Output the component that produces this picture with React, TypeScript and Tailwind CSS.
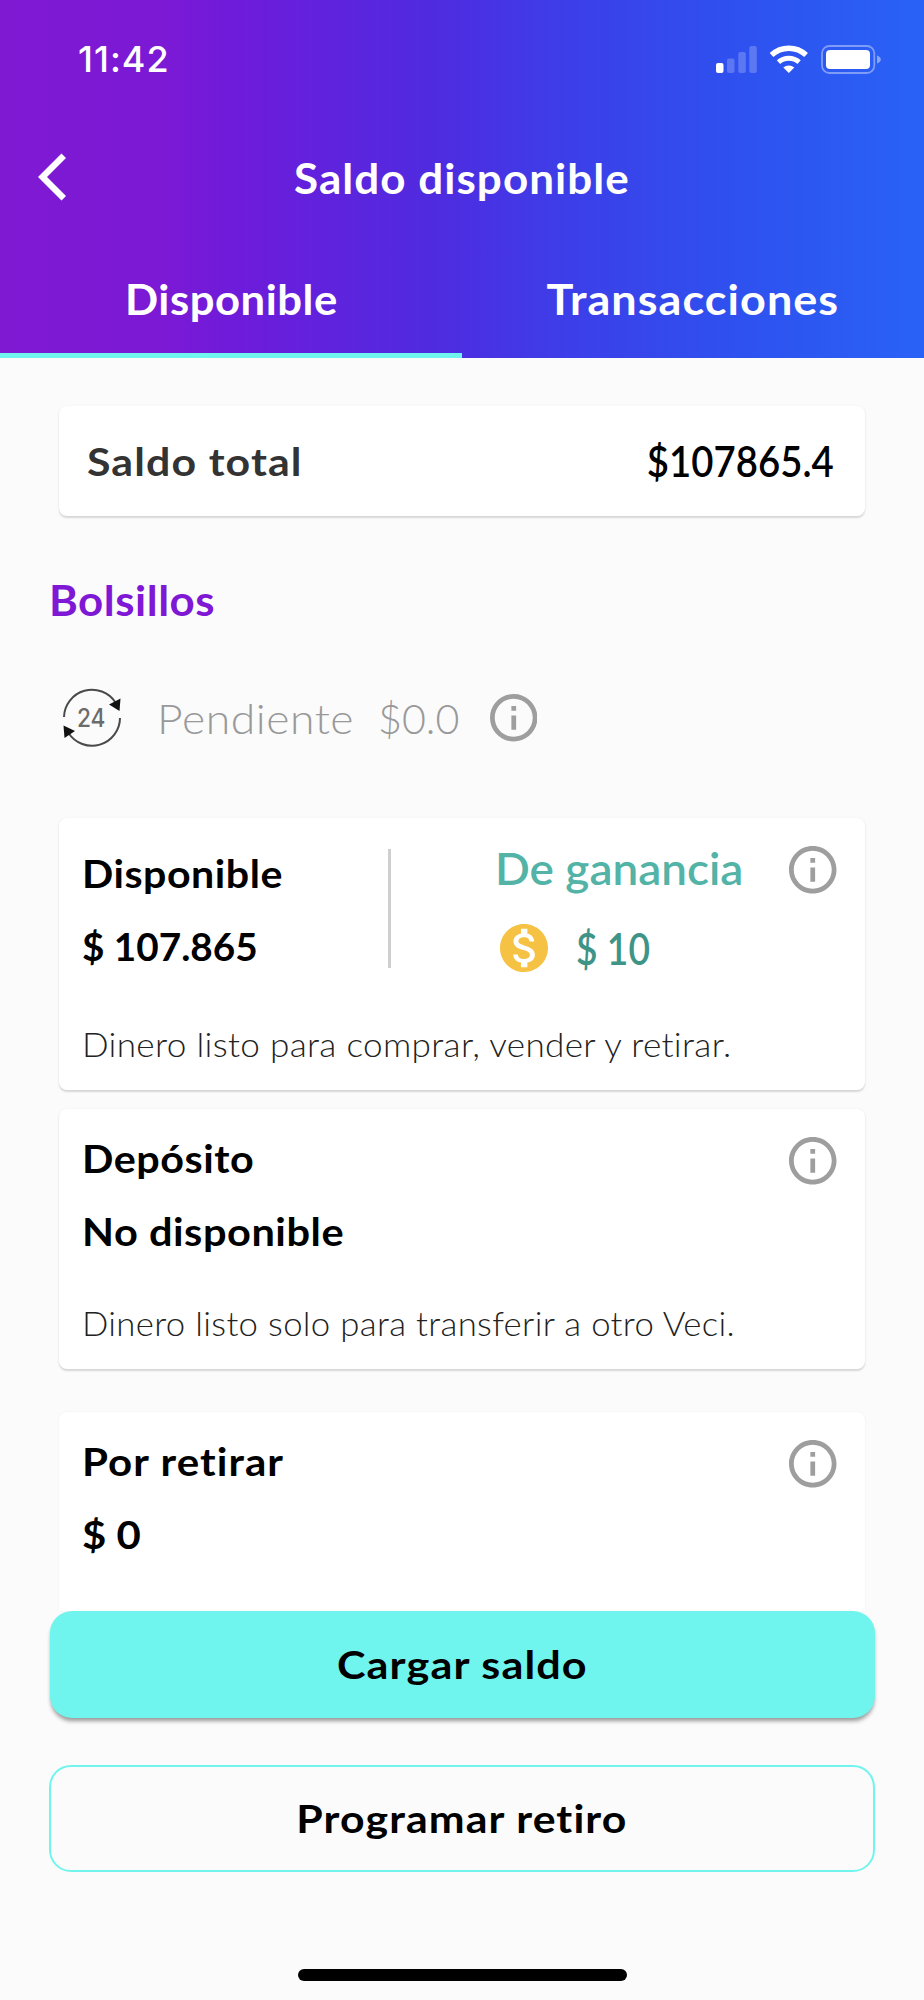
import type { ReactNode } from "react";

function InfoIcon() {
  return (
    <svg viewBox="2 2 20 20" className="size-[47.500px] shrink-0" fill="#9e9e9e">
      <path d="M11 7h2v2h-2zm0 4h2v6h-2zm1-9C6.48 2 2 6.48 2 12s4.48 10 10 10 10-4.48 10-10S17.52 2 12 2zm0 18c-4.41 0-8-3.59-8-8s3.59-8 8-8 8 3.59 8 8-3.59 8-8 8z" />
    </svg>
  );
}

function CoinIcon() {
  return (
    <svg viewBox="2 2 20 20" className="size-12 shrink-0" fill="#f5c244">
      <path d="M12 2C6.48 2 2 6.48 2 12s4.48 10 10 10 10-4.48 10-10S17.52 2 12 2zm1.41 16.09V20h-2.67v-1.93c-1.71-.36-3.16-1.46-3.27-3.4h1.96c.1 1.05.82 1.87 2.65 1.87 1.96 0 2.4-.98 2.4-1.59 0-.83-.44-1.61-2.67-2.14-2.48-.6-4.18-1.62-4.18-3.67 0-1.72 1.39-2.84 3.11-3.21V4h2.67v1.95c1.86.45 2.79 1.86 2.85 3.39H14.3c-.05-1.11-.64-1.87-2.22-1.87-1.5 0-2.4.68-2.4 1.64 0 .84.65 1.39 2.67 1.91s4.18 1.39 4.18 3.91c-.01 1.83-1.38 2.83-3.12 3.16z" />
    </svg>
  );
}

function Hours24Icon() {
  return (
    <svg viewBox="62 688 60 60" className="size-[60px] shrink-0">
      <g fill="none" stroke="#4a4a4a" strokeWidth="2">
        <path d="M64 717A28 28 0 0 1 115.500 702.500" />
        <path d="M120 718A28 28 0 0 1 68.500 733" />
      </g>
      <path d="M120.500 698.500L119.500 711L109 704.500Z" fill="#111" />
      <path d="M63.500 725.500L64.500 738L75 731Z" fill="#111" />
      <text x="77" y="727" fontSize="25" fontWeight="500" fill="#6b6b6b" textLength="28.500" lengthAdjust="spacingAndGlyphs" className="font-[Inter,sans-serif]">
        24
      </text>
    </svg>
  );
}

function StatusIcons() {
  return (
    <svg viewBox="715 42 168 32" className="h-8 w-[168px]" fill="white">
      <rect x="716" y="62" width="7.500" height="10" rx="2" />
      <g opacity="0.22">
        <rect x="727" y="57.500" width="7.500" height="14.500" rx="2" />
        <rect x="738.300" y="51" width="7.500" height="21" rx="2" />
        <rect x="749.300" y="45" width="7.500" height="27" rx="2" />
      </g>
      <g fill="none" stroke="white">
        <path d="M771.500 54a25.500 25.500 0 0 1 34.600 0" strokeWidth="5.400" />
        <path d="M778.500 61.200a15.500 15.500 0 0 1 20.600 0" strokeWidth="5" />
      </g>
      <path d="M783.300 66.500a8.200 8.200 0 0 1 11 0l-5.500 5.500z" />
      <rect x="822" y="45" width="52.300" height="27" rx="7.500" fill="none" stroke="white" strokeOpacity="0.4" strokeWidth="1.800" />
      <rect x="826" y="49" width="44" height="19" rx="4" />
      <path d="M877 54.500c2.500 1 3.800 2.300 3.800 4s-1.300 3-3.800 4z" opacity="0.45" />
    </svg>
  );
}

function Card({ className, children }: { className: string; children: ReactNode }) {
  return (
    <section className={`ml-[59px] w-[806px] shrink-0 bg-white ${className}`}>{children}</section>
  );
}

const shadow = "rounded-lg shadow-[0_1.5px_2px_rgba(0,0,0,0.14),0_0_3px_rgba(0,0,0,0.03)]";

export default function App() {
  return (
    <div className="flex h-[2000px] w-[924px] flex-col overflow-hidden bg-[#fbfbfb] font-[Lato,sans-serif] text-black [font-variant-ligatures:none]">
      <header className="h-[358px] shrink-0 bg-[linear-gradient(90deg,#8019d2_0%,#7b19d5_18%,#6f1bda_25%,#4f2be0_47%,#3c3fe9_62%,#2e51ef_80%,#2962f6_100%)] text-white">
        <div className="flex h-[118px] items-center justify-between pr-[41px] pl-[78px]">
          <span className="font-[Inter,sans-serif] text-[36px] font-[550] tracking-[1px]">11:42</span>
          <StatusIcons />
        </div>
        <div className="flex h-[118px] items-center pl-[38px]">
          <svg viewBox="0 0 28 48" className="h-12 w-7 shrink-0" fill="white">
            <path d="M23.500 0.500L0 24L23.500 47.500L28 43L9 24L28 5Z" />
          </svg>
          <h1 className="mt-[2px] ml-[228px] origin-left scale-x-[1.047] text-[42px] leading-[50px] font-bold tracking-[1px]">
            Saldo disponible
          </h1>
        </div>
        <nav className="grid grid-cols-2 text-[42px] font-bold">
          <div>
            <div className="flex h-[117px] items-center justify-center pt-[9px]">
              <span className="scale-x-[1.039] tracking-[0.5px]">Disponible</span>
            </div>
            <div className="h-[5px] bg-[#70f5ee]" />
          </div>
          <div className="flex h-[117px] items-center justify-center pt-[9px]">
            <span className="scale-x-[1.07] tracking-[1px]">Transacciones</span>
          </div>
        </nav>
      </header>

      <Card className={`mt-12 flex h-[110px] items-center justify-between pr-[31px] pl-7 ${shadow}`}>
        <span className="origin-left scale-x-[1.1] text-[39px] font-bold tracking-[1px] text-[#333]">Saldo total</span>
        <span className="origin-right scale-x-[0.891] text-[43px] font-semibold">$107865.4</span>
      </Card>

      <h2 className="mt-[59px] ml-[49px] shrink-0 origin-left scale-x-[1.045] self-start text-[42px] leading-[50px] font-bold tracking-[0.5px] text-[#7e18d4]">
        Bolsillos
      </h2>

      <div className="mt-[63px] ml-[62px] flex h-[60px] shrink-0 items-center text-[42px] leading-[58px] font-light text-[#999]">
        <Hours24Icon />
        <span className="ml-[35px] w-[221px] origin-left scale-x-[1.06] tracking-[0.5px]">Pendiente</span>
        <span className="w-[111.5px] origin-left scale-x-[0.981]">$0.0</span>
        <InfoIcon />
      </div>

      <Card className={`mt-[70px] h-[272px] pl-[23px] ${shadow}`}>
        <div className="flex h-[164px]">
          <div className="w-[306px] pt-[18.5px] text-[39px] leading-[73px] font-bold">
            <div className="origin-left scale-x-[1.055] tracking-[0.5px]">Disponible</div>
            <div className="origin-left scale-x-[0.992]">$ 107.865</div>
          </div>
          <div className="mt-[31px] h-[119px] w-[2.500px] bg-[#cfcfcf]" />
          <div className="ml-[104.5px] w-[294px] pt-[10.5px] text-[44px] leading-[79px] font-semibold">
            <div className="origin-left scale-x-[1.042] text-[#52b3a6]">De ganancia</div>
            <div className="flex items-center pt-px text-[#3f9488]">
              <div className="ml-[4.5px] flex">
                <CoinIcon />
              </div>
              <span className="ml-[28px] origin-left scale-x-[0.845]">$ 10</span>
            </div>
          </div>
          <div className="pt-7">
            <InfoIcon />
          </div>
        </div>
        <p className="mt-[42px] origin-left scale-x-[1.064] text-[33px] leading-10 font-light tracking-[0.3px] whitespace-nowrap text-[#222]">
          Dinero listo para comprar, vender y retirar.
        </p>
      </Card>

      <Card className={`mt-[19px] h-[260px] pl-[23px] ${shadow}`}>
        <div className="flex h-[158.5px]">
          <div className="w-[707px] pt-[12.5px] text-[39px] leading-[73px] font-bold">
            <div className="origin-left scale-x-[1.06] tracking-[0.5px]">Depósito</div>
            <div className="origin-left scale-x-[1.065] tracking-[0.5px]">No disponible</div>
          </div>
          <div className="pt-7">
            <InfoIcon />
          </div>
        </div>
        <p className="mt-[35.5px] origin-left scale-x-[1.053] text-[33px] leading-10 font-light tracking-[0.3px] whitespace-nowrap text-[#222]">
          Dinero listo solo para transferir a otro Veci.
        </p>
      </Card>

      <Card className="mt-[43px] flex h-[199px] rounded-t-lg pl-[23px] shadow-[0_0_3px_rgba(0,0,0,0.05)]">
        <div className="w-[707px] pt-[12.5px] text-[39px] leading-[73px] font-bold">
          <div className="origin-left scale-x-[1.078] tracking-[1px]">Por retirar</div>
          <div className="origin-left scale-x-[1.074]">$ 0</div>
        </div>
        <div className="pt-7">
          <InfoIcon />
        </div>
      </Card>

      <button className="relative ml-[49.5px] h-[107px] w-[825px] shrink-0 rounded-[22px] bg-[#70f5ee] text-[39px] font-bold shadow-[0_4px_4px_-1px_rgba(0,0,0,0.4)]">
        <span className="inline-block scale-x-[1.106] tracking-[1px]">Cargar saldo</span>
      </button>
      <button className="mt-[47px] ml-[49px] h-[107px] w-[826px] shrink-0 rounded-[22px] border-2 border-[#70f5ee] text-[39px] font-bold">
        <span className="inline-block scale-x-[1.097] tracking-[1px]">Programar retiro</span>
      </button>
      <div className="mt-[97px] h-3 w-[329px] shrink-0 self-center rounded-full bg-black" />
    </div>
  );
}
